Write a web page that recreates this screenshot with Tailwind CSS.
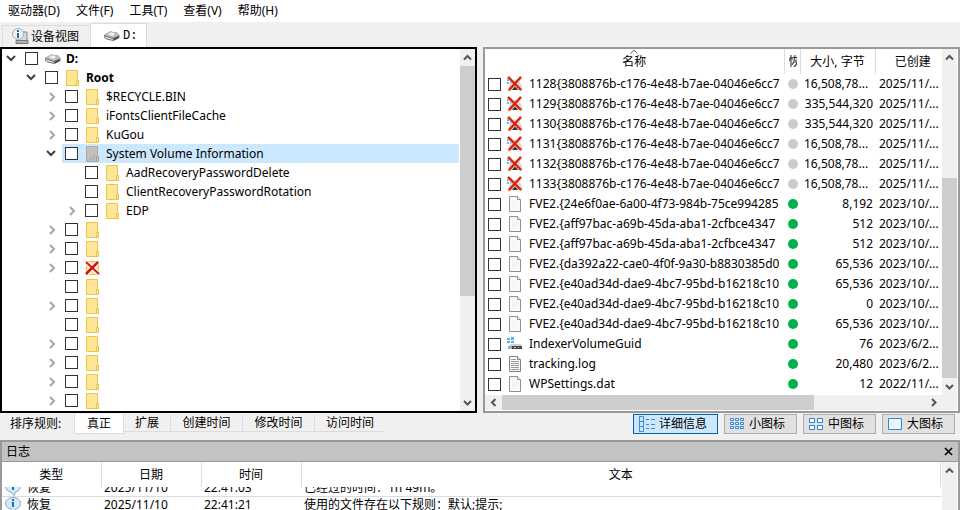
<!DOCTYPE html>
<html lang="zh-CN">
<head>
  <meta charset="UTF-8" />
  <meta name="viewport" content="width=device-width, initial-scale=1" />
  <title>D:</title>
  <script src="https://cdn.jsdelivr.net/npm/@tailwindcss/browser@4"></script>
</head>
<body class="h-screen flex flex-col overflow-hidden bg-[#f0f0f0] text-black text-[12px] leading-[16px] font-['Noto_Sans','Noto_Sans_CJK_SC',sans-serif]">

  <!-- icon sprite -->
  <svg class="hidden">
    <symbol id="folder" viewBox="0 0 18 16">
      <path d="M2.5.5h11v10h1v5h-12z" fill="#ffe694" stroke="#ecc44c"/>
      <path d="M12.5 15v-4.500h2V15" fill="#ffe694" stroke="#ecc44c"/>
    </symbol>
    <symbol id="folder-gray" viewBox="0 0 18 16">
      <path d="M2.5.5h11v10h1v5h-12z" fill="#c0c0c0" stroke="#a9a9a9"/>
      <path d="M12.500 15v-4.500h2V15" fill="#c8c8c8" stroke="#a0a0a0"/>
      <path d="M6 13h1M8 11h1M9 13h1M10 9h1M7 14h1M10 12h1" stroke="#999"/>
    </symbol>
    <symbol id="folder-x" viewBox="0 0 18 16">
      <path d="M2.500 1.500h12v13h-12z" fill="#ffe694" stroke="#ecc44c"/>
      <path d="M2 2l13 12M14 2L3 14" stroke="#fff" stroke-width="4"/>
      <path d="M2 2l13 12" stroke="#d01818" stroke-width="2"/>
      <path d="M14 2L2 14" stroke="#c81414" stroke-width="2.500"/>
    </symbol>
    <symbol id="drive" viewBox="0 0 18 16">
      <path d="M1 7l6-3.500 7 1 2.500 3V10l-6 3-7-1.500-2.500-2z" fill="#6e6e6e"/>
      <path d="M1 7l6-3.500 7 1 2 3-6 2.500z" fill="#bdbdbd"/>
      <path d="M5 6.500l3-2 4 1-2 2.500z" fill="#f3f3f3"/>
      <path d="M1 8l9 3v1l-7-1.500z" fill="#dadada"/>
      <path d="M11 11l4-2v1l-4 2z" fill="#333"/>
    </symbol>
    <symbol id="drive-x" viewBox="0 0 16 16">
      <path d="M0 3h2v2H0zM3 2h2v3H3zM0 6h2v2H0zM3 6h2v2H3z" fill="#5fb4f5"/>
      <path d="M5 6l3-3 5 3 2 4v4H2V9z" fill="#dcdcdc"/>
      <path d="M1 1l14 13M14 1L1 15" stroke="#f3c08c" stroke-width="3"/>
      <path d="M1 1l13 13M14 1L2 14" stroke="#d81e14" stroke-width="2.200"/>
      <path d="M8 10.500l3 3.500H5z" fill="#333"/>
    </symbol>
    <symbol id="file" viewBox="0 0 16 16">
      <path d="M2.500.5h8l3 3v12h-11z" fill="#fafafa" stroke="#909090"/>
      <path d="M10.500.5v3h3" fill="#fff" stroke="#909090"/>
      <path d="M5 6h6M5 8h6M5 10h6M5 12h6" stroke="#e8e8e8" stroke-dasharray="1 1"/>
    </symbol>
    <symbol id="file-text" viewBox="0 0 16 16">
      <path d="M2.500.5h8l3 3v12h-11z" fill="#fafafa" stroke="#808080"/>
      <path d="M10.500.5v3h3" fill="#fff" stroke="#808080"/>
      <path d="M4 3.500h5M4 5.500h8M4 7.500h8M4 9.500h8M4 11.500h8M4 13.500h8" stroke="#999"/>
    </symbol>
    <symbol id="volume" viewBox="0 0 16 16">
      <path d="M0 2h3v2H0zM4 1h3v3H4zM0 5h3v2H0zM4 5h3v2H4z" fill="#55b0f7"/>
      <path d="M4 8h10l1 2H2z" fill="#d0d0d0"/>
      <path d="M1 10h14v3H1z" fill="#444"/>
      <path d="M1 10h4v3H1z" fill="#aaa"/>
      <path d="M7 11.500h2M11 11.500h1" stroke="#ccc"/>
    </symbol>
    <symbol id="info" viewBox="0 0 16 16">
      <path d="M8 .5c4.200 0 7.500 2.500 7.500 5.700S13 11.500 10.500 12L9 15.500 6 12C3 11.500.5 9.200.5 6.200S3.800.5 8 .5z" fill="#d5ebfa" stroke="#8ea5b5"/>
      <path d="M7 2h2v2H7zM6.500 5H9v5H7V6h-.5z" fill="#1674c4"/>
    </symbol>
    <symbol id="up" viewBox="0 0 15 17"><path d="M4 10.500L7.500 7l3.500 3.500" fill="none" stroke="#555" stroke-width="2"/></symbol>
    <symbol id="down" viewBox="0 0 15 17"><path d="M4 7l3.500 3.500L11 7" fill="none" stroke="#555" stroke-width="2"/></symbol>
    <symbol id="left" viewBox="0 0 17 15"><path d="M10.500 4L7 7.500l3.500 3.500" fill="none" stroke="#555" stroke-width="2"/></symbol>
    <symbol id="right" viewBox="0 0 17 15"><path d="M7 4l3.500 3.500L7 11" fill="none" stroke="#555" stroke-width="2"/></symbol>
    <symbol id="open" viewBox="0 0 12 12"><path d="M2 3l4 4 4-4" fill="none" stroke="#404040" stroke-width="2"/></symbol>
    <symbol id="closed" viewBox="0 0 12 12"><path d="M5 2l4 4-4 4" fill="none" stroke="#a6a6a6" stroke-width="2"/></symbol>
  </svg>

  <nav class="flex shrink-0 gap-4 h-[22px] pl-2 items-center bg-white">
    <button>驱动器(D)</button>
    <button>文件(F)</button>
    <button>工具(T)</button>
    <button>查看(V)</button>
    <button>帮助(H)</button>
  </nav>

  <div class="flex shrink-0 h-[25px] pl-[2px] pt-px items-end">
    <button class="flex items-center gap-[2px] w-[88px] h-[22px] pl-[9px] border-l border-t border-[#dcdcdc]">
      <svg class="size-[17px]" viewBox="0 0 17 17">
        <path d="M8 4h7v9H5z" fill="#d9d9d9" stroke="#888"/>
        <path d="M4 12.500h12v3H4z" fill="#aeb4bb" stroke="#777"/>
        <circle cx="6" cy="6" r="5.500" fill="#e8f1f7" stroke="#a5b0b8"/>
        <path d="M5 2h2v2H5zM5 5h2v5H5z" fill="#2a6da8"/>
      </svg>
      设备视图
    </button>
    <button class="flex items-center gap-[2px] w-[57px] h-[24px] pl-3 bg-white border border-b-0 border-[#dcdcdc] font-['Liberation_Mono',monospace]">
      <svg class="w-[18px] h-4"><use href="#drive"/></svg>D:
    </button>
  </div>

  <main class="grid flex-1 min-h-0 grid-cols-2 gap-[6px]">
    <!-- folder tree -->
    <section class="flex min-w-0 min-h-0 border-2 border-black bg-white">
      <ul id="tree" class="flex-1 min-w-0 pr-px overflow-hidden"></ul>
      <div class="flex flex-col w-[15px] bg-[#f0f0f0]">
        <svg class="w-[15px] h-[17px]"><use href="#up"/></svg>
        <div class="h-[230px] bg-[#cdcdcd]"></div>
        <svg class="w-[15px] h-[17px] mt-auto"><use href="#down"/></svg>
      </div>
    </section>

    <!-- file list -->
    <section class="flex flex-col min-w-0 min-h-0 border-2 border-[#999] bg-white">
      <div class="flex flex-1 min-h-0 pr-px">
        <div class="flex-1 min-w-0 overflow-hidden">
          <table class="w-full table-fixed">
            <thead>
              <tr class="h-[25px]">
                <th class="relative font-normal border-r border-[#dcdcdc]">
                  <svg class="absolute top-0 left-1/2 -translate-x-1/2 w-[9px] h-[5px]" viewBox="0 0 9 5"><path d="M1 4.500l3.500-3.500L8 4.500" fill="none" stroke="#666"/></svg>
                  名称
                </th>
                <th class="w-[16px] pl-1 pr-[3px] font-normal border-r border-[#dcdcdc]"><div class="w-2 overflow-hidden whitespace-nowrap text-left">恢</div></th>
                <th class="w-[75px] font-normal border-r border-[#dcdcdc]">大小, 字节</th>
                <th class="w-[67px] pl-2 font-normal">已创建</th>
              </tr>
            </thead>
            <tbody id="files"></tbody>
          </table>
        </div>
        <div class="flex flex-col w-[15px] bg-[#f0f0f0]">
          <svg class="w-[15px] h-[17px]"><use href="#up"/></svg>
          <div class="h-[200px] mt-auto bg-[#cdcdcd]"></div>
          <svg class="w-[15px] h-[17px]"><use href="#down"/></svg>
        </div>
      </div>
      <div class="flex shrink-0 h-[15px] mb-px mr-px pr-[15px] bg-[#f0f0f0]">
        <svg class="w-[17px] h-[15px]"><use href="#left"/></svg>
        <div class="w-[312px] bg-[#cdcdcd]"></div>
        <svg class="w-[17px] h-[15px] ml-auto"><use href="#right"/></svg>
      </div>
    </section>
  </main>

  <div class="flex shrink-0 h-[27px] pl-[10px] pr-[5px] pt-px">
    <span class="w-16 pt-[2px]">排序规则:</span>
    <div class="flex items-start">
      <button class="w-[50px] h-5 bg-white border border-t-0 border-[#dcdcdc]">真正</button>
      <button class="w-[47px] h-[18px] border-r border-b border-[#dcdcdc]">扩展</button>
      <button class="w-[72px] h-[18px] border-r border-b border-[#dcdcdc]">创建时间</button>
      <button class="w-[72px] h-[18px] border-r border-b border-[#dcdcdc]">修改时间</button>
      <button class="w-[70px] h-[18px] border-b border-[#dcdcdc]">访问时间</button>
    </div>
    <div class="flex gap-[6px] ml-auto">
      <button class="flex items-center gap-1 w-[85px] h-5 pl-[5px] bg-[#cce8ff] border border-[#0a5fb4]">
        <svg class="w-4 h-4" viewBox="0 0 16 16"><path d="M.5.5h4v15h-4zM.5 5.500h4M.5 10.500h4M7 3.500h3M12 3.500h4M7 8.500h3M12 8.500h4M7 12.500h3M12 12.500h4" fill="none" stroke="#3a8ad8"/></svg>
        详细信息
      </button>
      <button class="flex items-center gap-1 w-[73px] h-5 pl-[5px] bg-[#e1e1e1] border border-[#adadad]">
        <svg class="w-[15px] h-3" viewBox="0 0 15 12"><path d="M.5.5h3v2h-3zM5.500.5h3v2h-3zM10.500.5h3v2h-3zM.5 4.500h3v2h-3zM5.500 4.500h3v2h-3zM10.500 4.500h3v2h-3zM.5 8.500h3v2h-3zM5.500 8.500h3v2h-3zM10.500 8.500h3v2h-3z" fill="#fff" stroke="#2f86d8"/></svg>
        小图标
      </button>
      <button class="flex items-center gap-1 w-[73px] h-5 pl-[5px] bg-[#e1e1e1] border border-[#adadad]">
        <svg class="w-[15px] h-3" viewBox="0 0 15 12"><path d="M.5.5h5v4h-5zM8.500.5h5v4h-5zM.5 7.500h5v4h-5zM8.500 7.500h5v4h-5z" fill="#fff" stroke="#2f86d8"/></svg>
        中图标
      </button>
      <button class="flex items-center gap-1 w-[73px] h-5 pl-[5px] bg-[#e1e1e1] border border-[#adadad]">
        <svg class="w-[15px] h-3" viewBox="0 0 15 12"><path d="M.5.5h13v11H.5z" fill="#eaf6fd" stroke="#2f86d8"/></svg>
        大图标
      </button>
    </div>
  </div>

  <!-- log -->
  <section class="shrink-0 h-[70px] overflow-hidden border-2 border-b-0 border-[#999] bg-white">
    <header class="flex h-5 pl-1 pr-[5px] items-center justify-between bg-[#c3c3c3] border-b border-[#999]">
      <h2>日志</h2>
      <button aria-label="关闭"><svg class="w-[9px] h-[9px]" viewBox="0 0 9 9"><path d="M1 1l7 7M8 1L1 8" stroke="#000" stroke-width="1.600"/></svg></button>
    </header>
    <div class="flex pr-px">
      <table class="flex-1 table-fixed w-full">
        <thead>
          <tr class="h-[25px]">
            <th class="w-[99px] font-normal border-r border-[#dcdcdc]">类型</th>
            <th class="w-[100px] font-normal border-r border-[#dcdcdc]">日期</th>
            <th class="w-[100px] font-normal border-r border-[#dcdcdc]">时间</th>
            <th class="font-normal border-r border-[#dcdcdc]">文本</th>
          </tr>
        </thead>
        <tbody id="log"></tbody>
      </table>
      <div class="w-[15px] shrink-0 ml-px bg-[#f0f0f0]">
        <svg class="w-[15px] h-[17px]"><use href="#up"/></svg>
      </div>
    </div>
  </section>

  <script>
    // level, chevron, icon, name
    const tree = [
      [0, "open", "drive", "D:"],
      [1, "open", "folder", "Root"],
      [2, "closed", "folder", "$RECYCLE.BIN"],
      [2, "closed", "folder", "iFontsClientFileCache"],
      [2, "closed", "folder", "KuGou"],
      [2, "open", "folder-gray", "System Volume Information"],
      [3, "", "folder", "AadRecoveryPasswordDelete"],
      [3, "", "folder", "ClientRecoveryPasswordRotation"],
      [3, "closed", "folder", "EDP"],
      [2, "closed", "folder", ""],
      [2, "closed", "folder", ""],
      [2, "closed", "folder-x", ""],
      [2, "", "folder", ""],
      [2, "closed", "folder", ""],
      [2, "", "folder", ""],
      [2, "closed", "folder", ""],
      [2, "closed", "folder", ""],
      [2, "closed", "folder", ""],
      [2, "closed", "folder", ""]
    ];

    const checkbox = '<input type="checkbox" class="appearance-none shrink-0 size-[13px] border border-[#333] bg-white" />';

    document.getElementById("tree").innerHTML = tree.map(([level, chevron, icon, name]) => `
      <li class="flex h-[19px]" style="padding-left: ${level * 20 + 3}px">
        <span class="flex items-center w-[17px] shrink-0">${chevron ? `<svg class="size-3"><use href="#${chevron}"/></svg>` : ""}</span>
        <label class="flex flex-1 items-center pl-[3px] whitespace-nowrap ${level < 2 ? "font-bold" : ""} ${icon === "folder-gray" ? "bg-[#cce8ff]" : ""}">
          ${checkbox}
          <svg class="w-[18px] h-4 ml-[6px] mr-1 shrink-0"><use href="#${icon}"/></svg>
          <span>${name}</span>
        </label>
      </li>`).join("");

    // icon, name, size, created
    const files = [
      ["drive-x", "1128{3808876b-c176-4e48-b7ae-04046e6cc7", "16,508,78...", "2025/11/..."],
      ["drive-x", "1129{3808876b-c176-4e48-b7ae-04046e6cc7", "335,544,320", "2025/11/..."],
      ["drive-x", "1130{3808876b-c176-4e48-b7ae-04046e6cc7", "335,544,320", "2025/11/..."],
      ["drive-x", "1131{3808876b-c176-4e48-b7ae-04046e6cc7", "16,508,78...", "2025/11/..."],
      ["drive-x", "1132{3808876b-c176-4e48-b7ae-04046e6cc7", "16,508,78...", "2025/11/..."],
      ["drive-x", "1133{3808876b-c176-4e48-b7ae-04046e6cc7", "16,508,78...", "2025/11/..."],
      ["file", "FVE2.{24e6f0ae-6a00-4f73-984b-75ce994285", "8,192", "2023/10/..."],
      ["file", "FVE2.{aff97bac-a69b-45da-aba1-2cfbce4347", "512", "2023/10/..."],
      ["file", "FVE2.{aff97bac-a69b-45da-aba1-2cfbce4347", "512", "2023/10/..."],
      ["file", "FVE2.{da392a22-cae0-4f0f-9a30-b8830385d0", "65,536", "2023/10/..."],
      ["file", "FVE2.{e40ad34d-dae9-4bc7-95bd-b16218c10", "65,536", "2023/10/..."],
      ["file", "FVE2.{e40ad34d-dae9-4bc7-95bd-b16218c10", "0", "2023/10/..."],
      ["file", "FVE2.{e40ad34d-dae9-4bc7-95bd-b16218c10", "65,536", "2023/10/..."],
      ["volume", "IndexerVolumeGuid", "76", "2023/6/2..."],
      ["file-text", "tracking.log", "20,480", "2023/6/2..."],
      ["file", "WPSettings.dat", "12", "2022/11/..."]
    ];

    document.getElementById("files").innerHTML = files.map(([icon, name, size, created]) => `
      <tr class="h-5">
        <td class="p-0">
          <label class="flex items-center h-5 pl-[3px] -mr-[3px] overflow-hidden whitespace-nowrap">
            ${checkbox}
            <svg class="size-4 ml-[6px] mr-[6px] shrink-0"><use href="#${icon}"/></svg>
            <span>${name}</span>
          </label>
        </td>
        <td class="p-0"><div class="size-[10px] ml-1 rounded-full ${icon === "drive-x" ? "bg-[#cbcbcb]" : "bg-[#00b04c]"}"></div></td>
        <td class="p-0 pr-[2px] whitespace-nowrap ${size.endsWith("...") ? "pl-1 text-left" : "text-right"}">${size}</td>
        <td class="p-0 pl-1 whitespace-nowrap">${created}</td>
      </tr>`).join("");

    const log = [
      ["恢复", "2025/11/10", "22:41:03", "已经过的时间：1h 49m。"],
      ["恢复", "2025/11/10", "22:41:21", "使用的文件存在以下规则：默认;提示;"]
    ];

    // the first row is scrolled half out of view under the header
    document.getElementById("log").innerHTML = log.map(([type, date, time, text], i) => {
      const cell = i === 0 ? "flex items-end h-[9px] overflow-hidden pl-[3px]" : "flex items-end h-4 pl-[3px]";
      return `
      <tr class="border-b border-[#dcdcdc]">
        <td class="p-0"><div class="${cell}"><svg class="size-4 mr-[6px] shrink-0"><use href="#info"/></svg>${type}</div></td>
        <td class="p-0"><div class="${cell}">${date}</div></td>
        <td class="p-0"><div class="${cell}">${time}</div></td>
        <td class="p-0"><div class="${cell}">${text}</div></td>
      </tr>`;
    }).join("");
  </script>
</body>
</html>
